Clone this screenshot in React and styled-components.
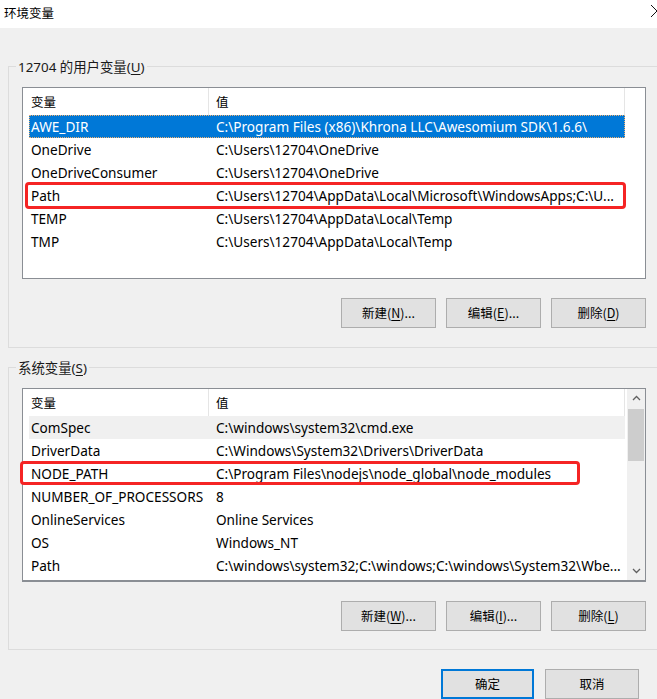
import React from "react";
import styled, { createGlobalStyle } from "styled-components";

const Global = createGlobalStyle`
  html, body { margin: 0; padding: 0; background: #f0f0f0; }
  body { font-family: "Noto Sans", "Noto Sans CJK SC", sans-serif; font-size: 13.6px; color: #000; }
  * { box-sizing: border-box; }
`;

const Window = styled.div`
  width: 657px;
  height: 699px;
  overflow: hidden;
  background: #f0f0f0;
  position: relative;
  display: flex;
  flex-direction: column;
`;

const TitleBar = styled.div`
  height: 28px;
  flex: none;
  background: #fff;
  display: flex;
  align-items: center;
  padding: 0 0 4px 4px;
  font-family: "Noto Sans CJK SC", sans-serif;
  font-size: 12.5px;
  position: relative;
`;

const CloseIcon = styled.svg`
  position: absolute;
  right: -7px;
  top: 4px;
`;

const Body = styled.div`
  padding: 38px 0 0 8px;
  display: flex;
  flex-direction: column;
`;

const GroupBox = styled.div`
  width: 660px;
  border: 1px solid #dcdcdc;
  border-right: none;
  padding: 0 0 ${(p) => p.$pb}px 13px;
  margin-top: ${(p) => p.$mt}px;
  display: flex;
  flex-direction: column;
`;

const GroupTitle = styled.div`
  height: 20px;
  line-height: 20px;
  margin: -10px 0 0 -6px;
  padding: 0 2px;
  width: fit-content;
  background: #f0f0f0;
  font-family: "Noto Sans", "Noto Sans CJK SC", sans-serif;
  font-size: 13.4px;
  color: #1a1a1a;
`;

const U = styled.span`
  text-decoration: underline;
  text-underline-offset: 2px;
`;

const ListBox = styled.div`
  margin-top: 10px;
  width: 624px;
  height: ${(p) => p.$h}px;
  border: 1px solid #8a8e94;
  border-bottom-width: ${(p) => p.$bb || 1}px;
  background: #fff;
  display: flex;
`;

const ListMain = styled.div`
  width: 603px;
  display: flex;
  flex-direction: column;
`;

const Header = styled.div`
  display: grid;
  grid-template-columns: 186px 416px;
  height: 27px;
  flex: none;
`;

const HeaderCell = styled.div`
  border-right: 1px solid #e5e5e5;
  display: flex;
  align-items: center;
  padding-left: ${(p) => p.$pl}px;
  font-family: "Noto Sans CJK SC", sans-serif;
  font-size: 12.5px;
`;

const Row = styled.div`
  position: relative;
  display: grid;
  grid-template-columns: 180px 1fr;
  height: 23px;
  width: 596px;
  margin-left: 6px;
  align-items: center;
  flex: none;
  background: ${(p) => (p.$selected ? "#0078d7" : p.$hover ? "#f0f0f0" : "transparent")};
  color: ${(p) => (p.$selected ? "#fff" : "#000")};
  outline: ${(p) => (p.$selected ? "1px dotted #f0b070" : "none")};
  outline-offset: -1px;
`;

const Cell = styled.div`
  white-space: nowrap;
  overflow: visible;
  padding-left: ${(p) => p.$pl}px;
  line-height: 23px;
`;

const Mark = styled.div`
  position: absolute;
  top: ${(p) => p.$t}px;
  bottom: ${(p) => p.$b}px;
  left: ${(p) => p.$l}px;
  right: ${(p) => p.$r}px;
  border: 3px solid #f52424;
  border-radius: 4px;
  pointer-events: none;
`;

const ScrollTrack = styled.div`
  margin-left: 2px;
  width: 19px;
  background: #f0f0f0;
  display: flex;
  flex-direction: column;
  align-items: center;
`;

const ScrollArrow = styled.div`
  height: 18px;
  width: 100%;
  display: flex;
  align-items: center;
  justify-content: center;
  flex: none;
`;

const Thumb = styled.div`
  width: 16px;
  height: 52px;
  margin-top: 2px;
  background: #cdcdcd;
  flex: none;
`;

const Spacer = styled.div`
  flex: 1;
`;

const EmptyTrack = styled.div`
  margin-left: 2px;
  width: 19px;
`;

const ButtonRow = styled.div`
  display: flex;
  gap: ${(p) => p.$gap || 10}px;
  justify-content: flex-end;
  margin-top: ${(p) => p.$mt}px;
  width: ${(p) => p.$w}px;
`;

const Button = styled.button`
  width: ${(p) => p.$w || 95}px;
  height: 30px;
  flex: none;
  background: #e1e1e1;
  border: ${(p) => (p.$default ? "2px solid #0078d7" : "1px solid #adadad")};
  font-family: "Noto Sans CJK SC", sans-serif;
  font-size: 12.5px;
  color: #000;
  padding: 0 0 2px;
  display: flex;
  align-items: center;
  justify-content: center;
`;

const Chevron = ({ up }) => (
  <svg width="9" height="6" viewBox="0 0 9 6">
    <polyline
      points={up ? "1,5 4.5,1.5 8,5" : "1,1 4.5,4.5 8,1"}
      fill="none"
      stroke="#606060"
      strokeWidth="1.3"
    />
  </svg>
);

const userVars = [
  ["AWE_DIR", "C:\\Program Files (x86)\\Khrona LLC\\Awesomium SDK\\1.6.6\\", { selected: true }],
  ["OneDrive", "C:\\Users\\12704\\OneDrive"],
  ["OneDriveConsumer", "C:\\Users\\12704\\OneDrive"],
  ["Path", "C:\\Users\\12704\\AppData\\Local\\Microsoft\\WindowsApps;C:\\U...", { mark: { t: -2, b: -2, l: -4, r: -1 } }],
  ["TEMP", "C:\\Users\\12704\\AppData\\Local\\Temp"],
  ["TMP", "C:\\Users\\12704\\AppData\\Local\\Temp"],
];

const sysVars = [
  ["ComSpec", "C:\\windows\\system32\\cmd.exe", { hover: true }],
  ["DriverData", "C:\\Windows\\System32\\Drivers\\DriverData"],
  ["NODE_PATH", "C:\\Program Files\\nodejs\\node_global\\node_modules", { mark: { t: -1, b: 0, l: -9, r: 45 } }],
  ["NUMBER_OF_PROCESSORS", "8"],
  ["OnlineServices", "Online Services"],
  ["OS", "Windows_NT"],
  ["Path", "C:\\windows\\system32;C:\\windows;C:\\windows\\System32\\Wbe..."],
];

const VarList = ({ rows, height, scroll, bb }) => (
  <ListBox $h={height} $bb={bb}>
    <ListMain>
      <Header>
        <HeaderCell $pl={8}>变量</HeaderCell>
        <HeaderCell $pl={7}>值</HeaderCell>
      </Header>
      {rows.map(([name, value, opt = {}], i) => (
        <Row key={i} $selected={opt.selected} $hover={opt.hover}>
          <Cell $pl={2}>{name}</Cell>
          <Cell $pl={7}>{value}</Cell>
          {opt.mark && <Mark $t={opt.mark.t} $b={opt.mark.b} $l={opt.mark.l} $r={opt.mark.r} />}
        </Row>
      ))}
    </ListMain>
    {scroll ? (
      <ScrollTrack>
        <ScrollArrow>
          <Chevron up />
        </ScrollArrow>
        <Thumb />
        <Spacer />
        <ScrollArrow>
          <Chevron />
        </ScrollArrow>
      </ScrollTrack>
    ) : (
      <EmptyTrack />
    )}
  </ListBox>
);

export default function App() {
  return (
    <>
      <Global />
      <Window>
        <TitleBar>
          环境变量
          <CloseIcon width="14" height="14" viewBox="0 0 14 14">
            <line x1="1" y1="1" x2="13" y2="13" stroke="#111" strokeWidth="1" />
            <line x1="13" y1="1" x2="1" y2="13" stroke="#111" strokeWidth="1" />
          </CloseIcon>
        </TitleBar>
        <Body>
          <GroupBox $mt={0} $pb={19}>
            <GroupTitle>
              12704 的用户变量(<U>U</U>)
            </GroupTitle>
            <VarList rows={userVars} height={192} />
            <ButtonRow $mt={19} $w={624}>
              <Button>新建(<U>N</U>)...</Button>
              <Button>编辑(<U>E</U>)...</Button>
              <Button>删除(<U>D</U>)</Button>
            </ButtonRow>
          </GroupBox>
          <GroupBox $mt={19} $pb={18}>
            <GroupTitle>
              系统变量(<U>S</U>)
            </GroupTitle>
            <VarList rows={sysVars} height={194} scroll bb={2} />
            <ButtonRow $mt={19} $w={624}>
              <Button>新建(<U>W</U>)...</Button>
              <Button>编辑(<U>I</U>)...</Button>
              <Button>删除(<U>L</U>)</Button>
            </ButtonRow>
          </GroupBox>
          <ButtonRow $mt={19} $w={631} $gap={11}>
            <Button $w={93} $default>确定</Button>
            <Button $w={94}>取消</Button>
          </ButtonRow>
        </Body>
      </Window>
    </>
  );
}
